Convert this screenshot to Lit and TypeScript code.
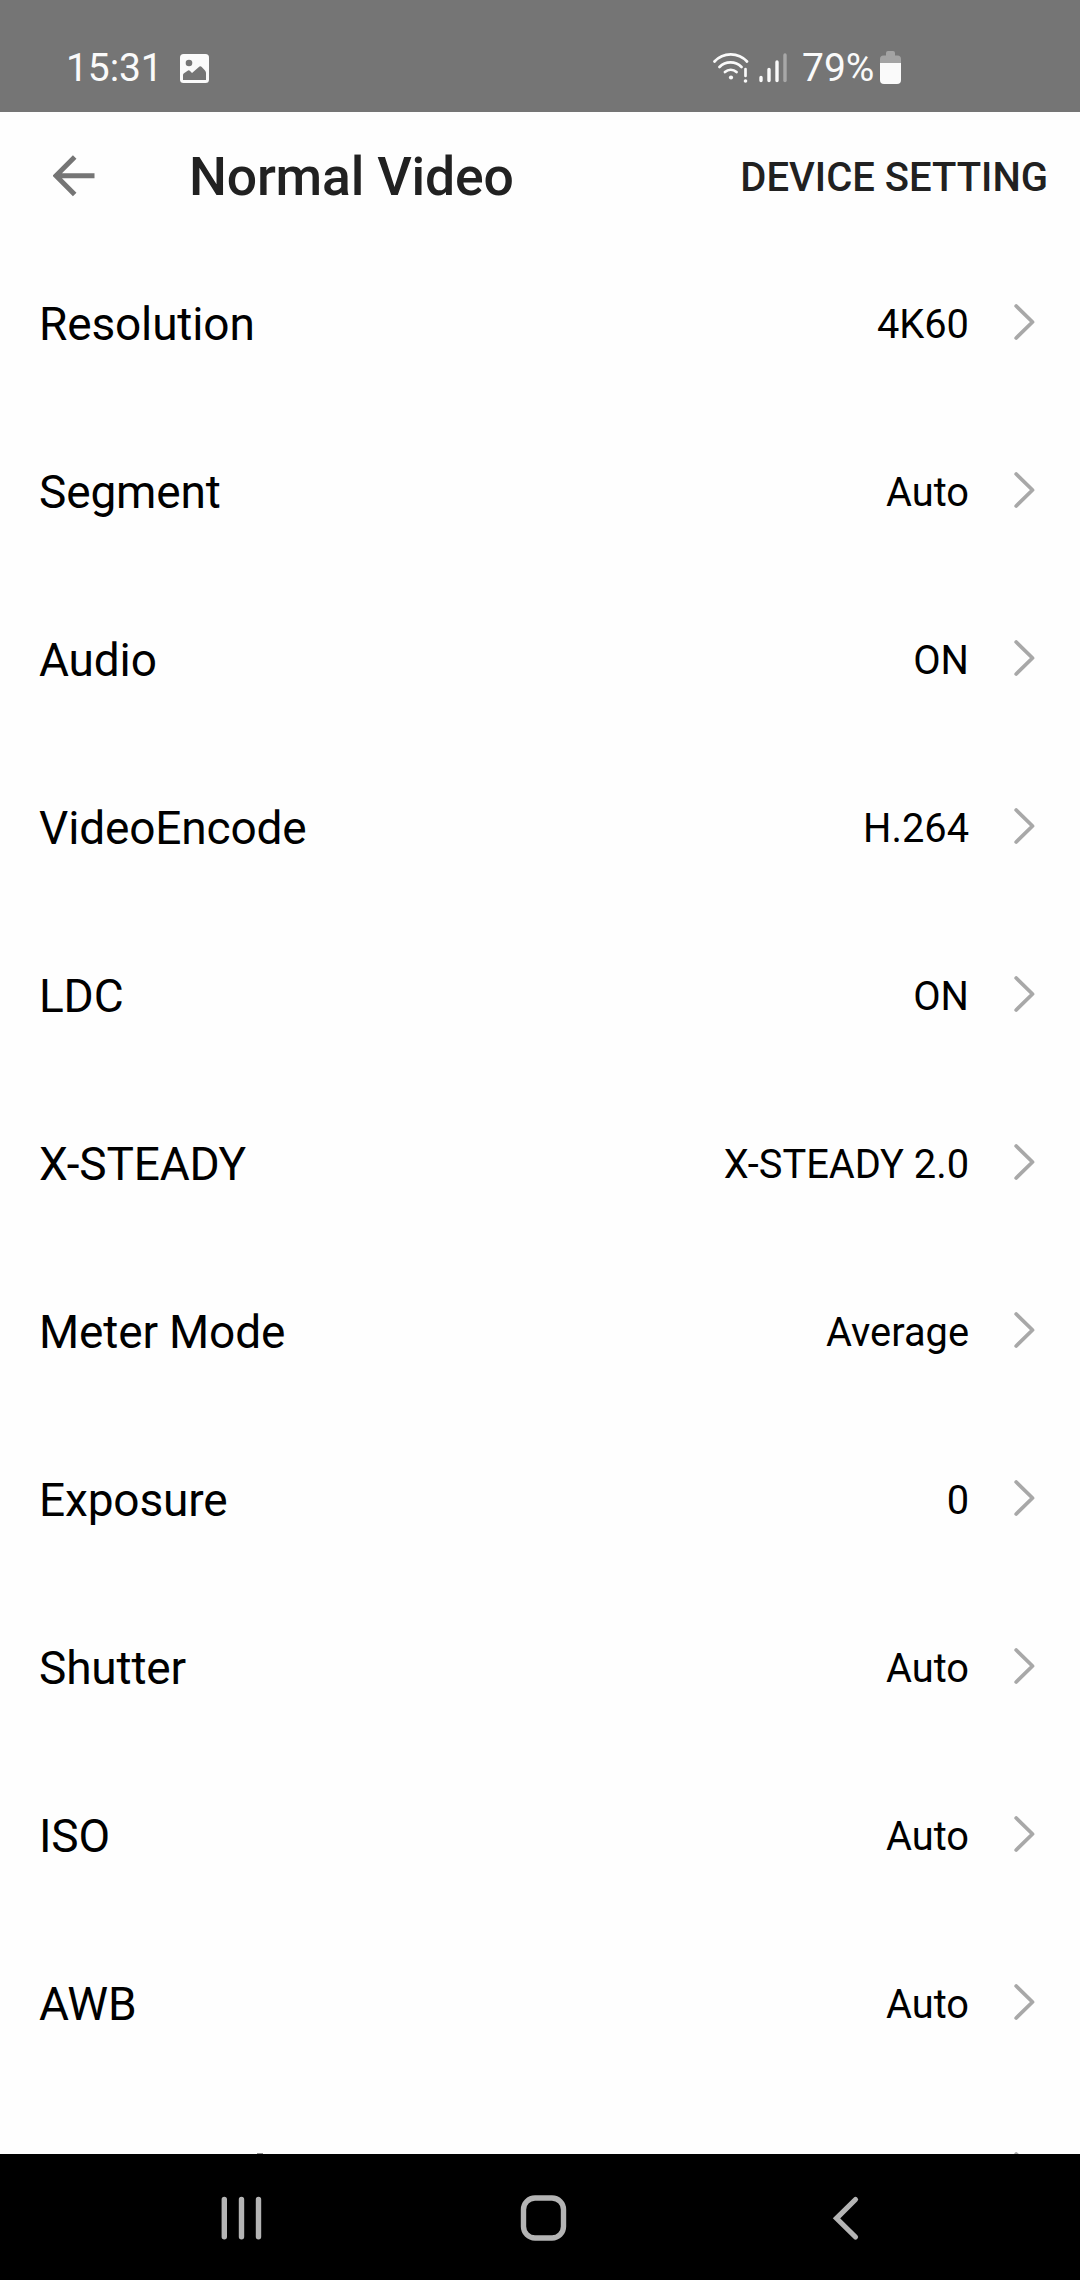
import { LitElement, html, css } from "lit";
import { customElement } from "lit/decorators.js";

const ROWS: [string, string][] = [
  ["Resolution", "4K60"],
  ["Segment", "Auto"],
  ["Audio", "ON"],
  ["VideoEncode", "H.264"],
  ["LDC", "ON"],
  ["X-STEADY", "X-STEADY 2.0"],
  ["Meter Mode", "Average"],
  ["Exposure", "0"],
  ["Shutter", "Auto"],
  ["ISO", "Auto"],
  ["AWB", "Auto"],
];

const chevron = html`<svg class="chevron" width="22" height="38" viewBox="0 0 22 38" fill="none" stroke="#a8a8a8" stroke-width="3.8" stroke-linecap="round" stroke-linejoin="round">
  <path d="M2.2 3L18.5 19L2.2 35" />
</svg>`;

@customElement("app-root")
export class AppRoot extends LitElement {
  static styles = css`
    :host {
      display: flex;
      flex-direction: column;
      width: 1080px;
      height: 2280px;
      overflow: hidden;
      background: #fefefe;
      font-family: Roboto, "Liberation Sans", sans-serif;
      color: #000;
      white-space: nowrap;
    }
    svg { display: block; flex: none; }
    .status {
      flex: none;
      height: 112px;
      box-sizing: border-box;
      padding: 24px 179px 0 66px;
      display: flex;
      align-items: center;
      background: #757575;
      color: #fafafa;
      font-size: 39px;
    }
    .clock { width: 114px; letter-spacing: -0.1px; }
    .grow { flex: 1; }
    .signal { margin-left: 9px; }
    .percent { margin-left: 14px; width: 72px; }
    .battery { margin: 0 0 1px 6px; }
    .toolbar {
      flex: none;
      height: 128px;
      padding: 0 32px 0 53px;
      box-sizing: border-box;
      display: flex;
      align-items: center;
      font-weight: 500;
      color: #212121;
    }
    .title { margin-left: 94px; padding-top: 2px; font-size: 53.5px; line-height: 64px; letter-spacing: -0.2px; }
    .action { padding-top: 3px; font-size: 40px; line-height: 48px; }
    .list { flex: 1; min-height: 0; overflow: hidden; }
    .row {
      height: 168px;
      box-sizing: border-box;
      padding: 0 44px 0 39px;
      display: flex;
      align-items: center;
    }
    .label { flex: 1; font-size: 46px; line-height: 56px; letter-spacing: -0.15px; }
    .value { padding-top: 2px; font-size: 39.8px; line-height: 48px; margin-right: 45px; }
    .chevron { margin-bottom: 5px; }
    .next { justify-content: space-between; padding-left: 256px; }
    .nav {
      flex: none;
      height: 126px;
      background: #000;
      display: flex;
      align-items: center;
      padding: 2px 0 0 219px;
      box-sizing: border-box;
    }
    .home { margin: 0 264px 0 257px; }
  `;

  render() {
    return html`
      <header class="status">
        <span class="clock">15:31</span>
        <svg width="29" height="29" viewBox="0 0 29 29">
          <rect width="29" height="29" rx="3.5" fill="#fafafa" />
          <circle cx="9" cy="9" r="3.3" fill="#757575" />
          <path d="M3 26V21Q3 20 4 19.300L8 16.500Q9 16 9.800 16.700L12 19L19.500 12.500Q20.500 11.700 21.500 12.700L25 16.500Q26 17.500 26 19V26Z" fill="#757575" />
        </svg>
        <span class="grow"></span>
        <svg width="36" height="32" viewBox="0 0 36 32" fill="none" stroke="#fafafa" stroke-width="2.7" stroke-linecap="round">
          <path d="M1.500 9.500A22 22 0 0 1 34 9.500M6.500 15A15.500 15.500 0 0 1 28.500 15M12 20A8.500 8.500 0 0 1 23.500 20M32.500 17V24" />
          <circle cx="18" cy="25.500" r="2.1" fill="#fafafa" stroke="none" />
          <circle cx="32.500" cy="29" r="1.8" fill="#fafafa" stroke="none" />
        </svg>
        <svg class="signal" width="30" height="32" viewBox="0 0 30 32" stroke="#fafafa" stroke-width="3.4" stroke-linecap="round">
          <path d="M3 25.500V28.500M11 17.500V28.500M19 10V28.500" />
          <path d="M27 3V28.500" stroke="#a8a8a8" />
        </svg>
        <span class="percent">79%</span>
        <svg class="battery" width="21" height="33" viewBox="0 0 21 33">
          <path d="M0 12V8Q0 4.500 3.500 4.500H6V2Q6 0 8 0H13Q15 0 15 2V4.500H17.500Q21 4.500 21 8V12Z" fill="#a3a3a3" />
          <path d="M0 12H21V29Q21 33 17 33H4Q0 33 0 29Z" fill="#fafafa" />
        </svg>
      </header>
      <div class="toolbar">
        <svg width="42" height="42" viewBox="0 0 42 42" fill="none" stroke="#757575" stroke-width="5">
          <path d="M41.500 20.700H4M21.700 2L3 20.700L21.700 39.400" />
        </svg>
        <span class="title">Normal Video</span>
        <span class="grow"></span>
        <span class="action">DEVICE SETTING</span>
      </div>
      <main class="list">
        ${ROWS.map(
          ([label, value]) => html`<div class="row">
            <span class="label">${label}</span>
            <span class="value">${value}</span>
            ${chevron}
          </div>`
        )}
        <div class="row next">
          <svg width="8" height="38" viewBox="0 0 8 38"><path d="M1 0H7V1H1Z" fill="#8c8c8c" /></svg>
          ${chevron}
        </div>
      </main>
      <nav class="nav">
        <svg width="44" height="46" viewBox="0 0 44 46" stroke="#b4b4b4" stroke-width="5.4" stroke-linecap="round">
          <path d="M5.300 4.500V41.800M22.500 4.500V41.800M39.500 4.500V41.800" />
        </svg>
        <svg class="home" width="48" height="48" viewBox="0 0 48 48" fill="none" stroke="#b4b4b4" stroke-width="5.4">
          <rect x="3.500" y="4" width="40" height="40" rx="11.500" />
        </svg>
        <svg width="28" height="46" viewBox="0 0 28 46" fill="none" stroke="#b4b4b4" stroke-width="5.2" stroke-linecap="round">
          <path d="M23.500 4.500L4.500 23.300L23.500 42" />
        </svg>
      </nav>
    `;
  }
}
